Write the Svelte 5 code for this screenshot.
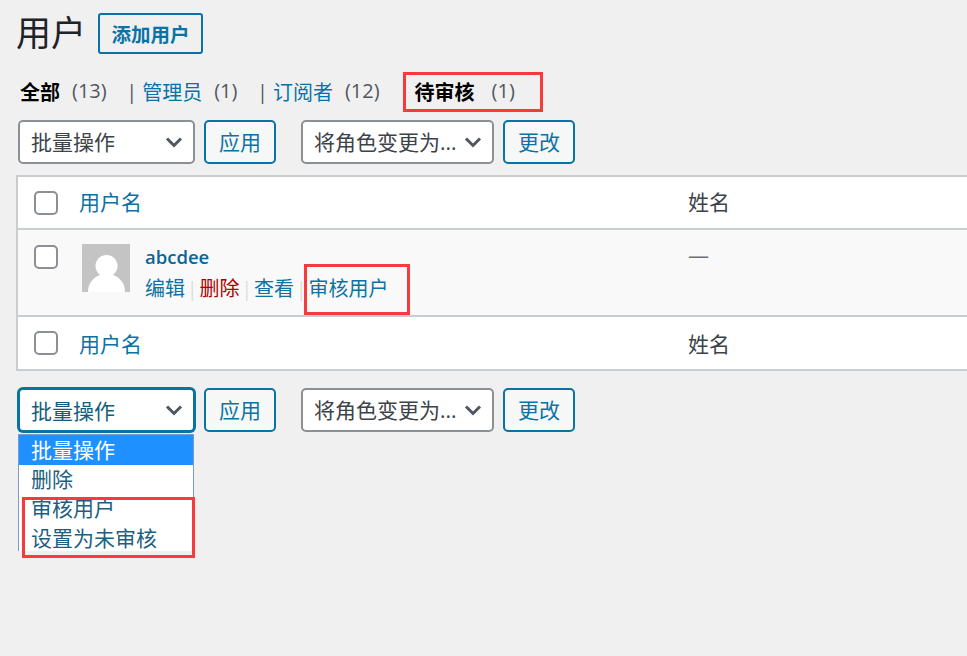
<script>
  const views = [
    { label: '全部', count: '(13)', current: true },
    { label: '管理员', count: '(1)', sep: true },
    { label: '订阅者', count: '(12)', sep: true }
  ];
  const options = ['批量操作', '删除', '审核用户', '设置为未审核'];
</script>

{#snippet chevron()}
  <svg class="chev" width="18" height="12" viewBox="0 0 18 12" aria-hidden="true">
    <path d="M2 2.5 L9 9.5 L16 2.5" fill="none" stroke="#50575e" stroke-width="3" />
  </svg>
{/snippet}

{#snippet toolbar(focused)}
  <div class="toolbar">
    <div class="select bulk" class:focused>
      <span>批量操作</span>{@render chevron()}
    </div>
    <div class="btn">应用</div>
    <div class="select role">
      <span>将角色变更为...</span>{@render chevron()}
    </div>
    <div class="btn">更改</div>
  </div>
{/snippet}

{#snippet headrow(cls)}
  <div class="row head {cls}">
    <span class="check"></span>
    <a class="namecol">用户名</a>
    <span class="realname">姓名</span>
  </div>
{/snippet}

<div class="page">
  <header class="title">
    <h1>用户</h1>
    <div class="add">添加用户</div>
  </header>

  <nav class="views">
    {#each views as v}
      {#if v.sep}<span class="sep">|</span>{/if}
      <span class="view">
        <span class={v.current ? 'cur' : 'link'}>{v.label}</span>
        <span class="count">{v.count}</span>
      </span>
    {/each}
    <span class="view pending">
      <span class="cur">待审核</span>
      <span class="count">(1)</span>
      <span class="mark"></span>
    </span>
  </nav>

  {@render toolbar(false)}

  <div class="table">
    {@render headrow('top')}
    <div class="row user">
      <span class="check"></span>
      <div class="avatar">
        <svg width="48" height="48" viewBox="0 0 48 48" aria-hidden="true">
          <rect width="48" height="48" fill="#c4c4c4" />
          <circle cx="24.5" cy="22" r="11" fill="#fff" />
          <path d="M6 48 C6 37 14 30 24.5 30 C35 30 43 37 43 48 Z" fill="#fff" />
        </svg>
      </div>
      <div class="info">
        <div class="uname">abcdee</div>
        <div class="actions">
          <a>编辑</a><i>|</i><a class="del">删除</a><i>|</i><a>查看</a><i>|</i><a class="approve">审核用户<span class="mark"></span></a>
        </div>
      </div>
      <span class="realname dash">—</span>
    </div>
    {@render headrow('bottom')}
  </div>

  <div class="lower">
    {@render toolbar(true)}
    <div class="menu">
      <div class="opt sel">{options[0]}</div>
      <div class="opt">{options[1]}</div>
      <div class="opt tight">{options[2]}</div>
      <div class="opt tight2">{options[3]}</div>
      <span class="mark"></span>
    </div>
  </div>
</div>

<style>
  :global(body) {
    margin: 0;
    background: #f0f0f1;
  }
  .page {
    width: 967px;
    height: 656px;
    overflow: hidden;
    box-sizing: border-box;
    padding: 12px 0 0 16px;
    font-family: "Open Sans", "Noto Sans CJK SC", sans-serif;
    font-size: 21px;
    color: #3c434a;
  }
  .title {
    display: flex;
    align-items: center;
    height: 42px;
  }
  h1 {
    margin: 0;
    font-size: 35px;
    font-weight: 400;
    line-height: 42px;
    color: #1d2327;
    width: 82px;
  }
  .add {
    box-sizing: border-box;
    width: 105px;
    height: 41px;
    border: 2px solid #0a73a5;
    border-radius: 3px;
    color: #0a73a5;
    font-size: 19.5px;
    font-weight: 700;
    line-height: 39px;
    text-align: center;
  }
  .views {
    display: flex;
    align-items: center;
    height: 30px;
    margin: 22px 0 0 4px;
    font-size: 20px;
    white-space: nowrap;
  }
  .view {
    display: flex;
    gap: 12px;
  }
  .cur { font-weight: 700; color: #000; }
  .link { color: #0a73a5; }
  .count { color: #50575e; }
  .sep { color: #50575e; margin: 0 5px 0 19.5px; }
  .pending {
    position: relative;
    margin-left: 35px;
    gap: 17px;
  }
  .mark {
    position: absolute;
    z-index: 2;
    border: 3px solid #f73a3a;
    box-sizing: border-box;
    pointer-events: none;
  }
  .pending .mark {
    left: -12px;
    top: -5px;
    width: 140px;
    height: 40px;
  }
  .toolbar {
    display: flex;
    align-items: center;
    height: 44px;
    margin: 0 0 0 2px;
  }
  .views + .toolbar { margin-top: 14px; }
  .select {
    box-sizing: border-box;
    height: 44px;
    border: 2px solid #8c8f94;
    border-radius: 5px;
    background: #fff;
    display: flex;
    align-items: center;
    justify-content: space-between;
    padding: 0 10px 0 11px;
    white-space: nowrap;
  }
  .select span { position: relative; top: -1px; }
  .focused span { top: 0; }
  .bulk { width: 177px; }
  .role { width: 193px; margin-left: 25px; }
  .focused {
    border-color: #0a73a5;
    box-shadow: 0 0 0 1px #0a73a5;
    color: #135e7d;
  }
  .btn {
    box-sizing: border-box;
    width: 72px;
    height: 44px;
    margin-left: 9px;
    border: 2px solid #0a73a5;
    border-radius: 5px;
    background: #f6f7f7;
    color: #0a73a5;
    line-height: 40px;
    text-align: center;
  }
  .table {
    margin-top: 11px;
    width: 1000px;
    border: 2px solid #c9ccd1;
    border-right: 0;
    box-sizing: border-box;
    background: #fff;
  }
  .row {
    display: flex;
    position: relative;
  }
  .head {
    height: 51px;
    align-items: center;
    background: #fff;
  }
  .head.top { border-bottom: 2px solid #c9ccd1; }
  .head.top .namecol, .head.top .realname { margin-bottom: 4px; }
  .head.bottom { height: 52px; border-top: 2px solid #c9ccd1; }
  .check {
    flex: none;
    box-sizing: border-box;
    width: 24px;
    height: 24px;
    margin-left: 16px;
    border: 2px solid #8c8f94;
    border-radius: 5px;
    background: #fff;
  }
  .namecol {
    color: #0a73a5;
    margin-left: 21px;
    width: 609px;
  }
  .realname { color: #3c434a; }
  .user {
    height: 85px;
    background: #f9f9f9;
  }
  .user .check { margin-top: 15px; }
  .avatar {
    margin: 14px 0 0 24px;
    width: 48px;
    height: 48px;
  }
  .avatar svg { display: block; }
  .info {
    margin: 13px 0 0 15px;
    width: 543px;
  }
  .uname {
    color: #0a6596;
    font-weight: 600;
    font-size: 18.5px;
    line-height: 27px;
  }
  .actions {
    display: flex;
    margin-top: 3px;
    line-height: 32px;
    font-size: 20px;
    color: #0a73a5;
  }
  .actions i {
    font-style: normal;
    color: #ddd;
    width: 14.5px;
    text-align: center;
    font-size: 20px;
  }
  .del { color: #a00; }
  .approve { position: relative; }
  .approve .mark {
    left: -5px;
    top: -9px;
    width: 106px;
    height: 51px;
  }
  .dash { margin-top: 12px; line-height: 27px; color: #6b7075; }
  .lower {
    position: relative;
    margin-top: 17px;
  }
  .menu {
    position: absolute;
    left: 2px;
    top: 46px;
    width: 176px;
    box-sizing: border-box;
    border: 1px solid #7e9bd0;
    border-bottom: 0;
    background: #fff;
    height: 117px;
    color: #1d5f80;
  }
  .opt {
    height: 29px;
    line-height: 29px;
    padding-left: 12px;
  }
  .opt.sel {
    height: 30px;
    line-height: 30px;
    background: #1e90ff;
    color: #fff;
  }
  .opt.tight { height: 29px; line-height: 29px; }
  .opt.tight2 { line-height: 31px; }
  .menu .mark {
    left: 3px;
    top: 62px;
    width: 173px;
    height: 61px;
  }
</style>
